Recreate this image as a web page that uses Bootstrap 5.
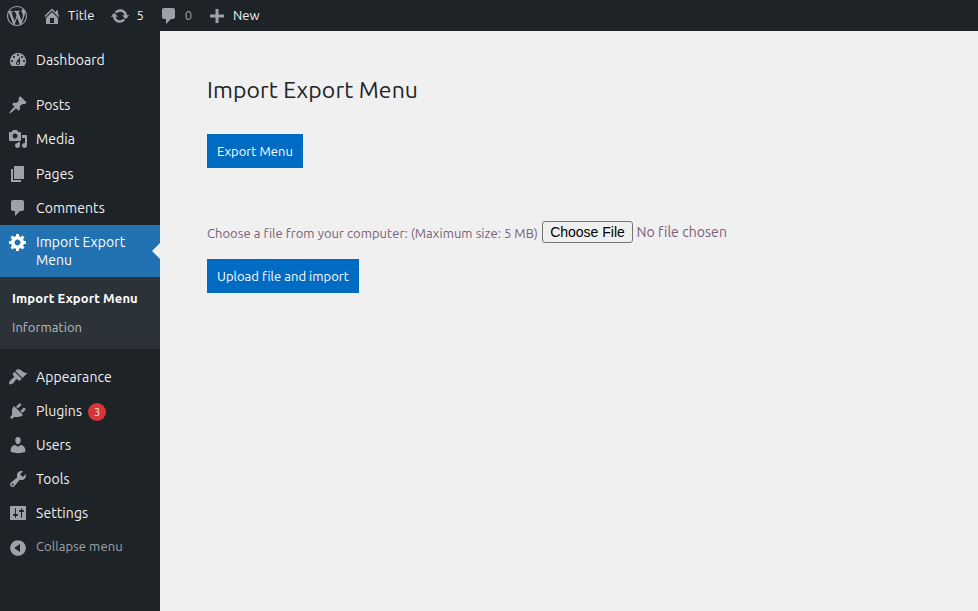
<!DOCTYPE html>
<html lang="en">
<head>
<meta charset="utf-8">
<meta name="viewport" content="width=device-width, initial-scale=1">
<title>Import Export Menu</title>
<link href="https://cdn.jsdelivr.net/npm/bootstrap@5.3.0/dist/css/bootstrap.min.css" rel="stylesheet">
<style>
body{font-family:Ubuntu,"Noto Sans",sans-serif;font-size:13px;background:#f0f0f0;color:#795f76;height:611px;overflow:hidden}
svg{fill:#9ca2a7;width:20px;height:20px;flex:none;display:block}
a{color:inherit;text-decoration:none}
.adminbar{height:31px;background:#1d2327;color:#f0f0f1;line-height:31px;padding-left:7px}
.adminbar a{gap:6px}
.bar-home{margin-left:15px}
.bar-item{margin-left:15px}
.bar-home + .bar-item{margin-left:16px}
.adminbar .zero{color:#9ca2a7}
.sidebar{width:160px;height:580px;background:#1d2327;color:#f0f0f1;padding-top:12px;flex:none}
.side-link{height:34.2px;padding-left:8px;gap:8px;font-size:14px;line-height:18px;letter-spacing:.07px}
.submenu ~ .side-link{height:34px}
.side-link.current{height:52px;background:#2271b1;color:#fff;padding-top:8px}
.side-link.current svg{fill:#fff;margin-top:-1px}
.side-link.current::after{content:"";position:absolute;right:0;top:18px;border:8px solid transparent;border-right-color:#f0f0f0;border-left:0}
.side-gap{margin-top:11px}
.submenu{height:72px;background:#2c3338;padding:12px 0 0 12px;line-height:19px;letter-spacing:.06px}
.submenu a{display:block;margin-bottom:10px;color:#b5bbc0}
.submenu a.here{color:#fff;font-weight:700;letter-spacing:.12px}
.count{width:18px;height:18px;background:#d63638;font-size:11px;margin-left:-2px;margin-top:2px;letter-spacing:0}
.sidebar .side-link.collapse-link{color:#a0a5aa;font-size:13px}
.collapse-link span{margin-top:-1px}
.collapse-link svg{margin-top:2px}
.content{padding:44px 0 0 47px}
.content h1{font-size:23px;line-height:30px;font-weight:400;color:#1d2327;margin:0 0 29px;letter-spacing:.1px}
.act{height:34px;padding:0 10px;border:0;border-radius:0;background:#006bc2;color:#fff;font-size:13px;line-height:34px;letter-spacing:.03px}
.file-row{margin-top:53px;height:22px;margin-bottom:16px}
.file-row label{letter-spacing:.04px;padding-top:3px;width:331px;white-space:nowrap}
.file-btn{font:14px/20px "Liberation Sans",Arial,sans-serif;border:1px solid #767676;border-radius:3px;background:#efefef;color:#000;padding:0;width:91px;height:22px;margin-left:4px}
.none{font-size:14px;margin-left:3.5px;letter-spacing:.05px}
</style>
<script src="https://cdn.jsdelivr.net/npm/bootstrap@5.3.0/dist/js/bootstrap.bundle.min.js"></script>
</head>
<body>
<header class="adminbar d-flex align-items-center">
  <a href="#"><svg viewBox="0 0 20 20"><path d="M20 10c0-5.51-4.49-10-10-10C4.48 0 0 4.49 0 10c0 5.52 4.48 10 10 10 5.51 0 10-4.48 10-10zM7.78 15.37L4.37 6.22c.55-.02 1.17-.08 1.17-.08.5-.06.44-1.13-.06-1.11 0 0-1.45.11-2.37.11-.18 0-.37 0-.58-.01C4.12 2.69 6.87 1.11 10 1.11c2.33 0 4.45.87 6.05 2.34-.68-.11-1.65.39-1.65 1.58 0 .74.45 1.36.9 2.1.35.61.55 1.36.55 2.46 0 1.49-1.4 5-1.4 5l-3.03-8.37c.54-.02.82-.17.82-.17.5-.05.44-1.25-.06-1.22 0 0-1.44.12-2.38.12-.87 0-2.33-.12-2.33-.12-.5-.03-.56 1.2-.06 1.22l.92.08 1.26 3.41zM17.41 10c.24-.64.74-1.87.43-4.25.7 1.29 1.05 2.71 1.05 4.25 0 3.29-1.73 6.24-4.4 7.78.97-2.59 1.94-5.2 2.92-7.78zM6.1 18.09C3.12 16.65 1.11 13.53 1.11 10c0-1.3.23-2.48.72-3.59C3.25 10.3 4.67 14.2 6.1 18.09zm4.03-6.63l2.58 6.98c-.86.29-1.76.45-2.71.45-.79 0-1.57-.11-2.29-.33.81-2.38 1.62-4.74 2.42-7.1z"/></svg></a>
  <a href="#" class="d-flex align-items-center bar-home"><svg viewBox="0 0 20 20"><path d="M16 8.5l1.53 1.53-1.06 1.06L10 4.6l-6.47 6.49-1.06-1.06L10 2.5l4 4v-2h2v4zm-6-2.46l6 5.99V18H4v-5.97zM12 17v-5H8v5h4z"/></svg><span>Title</span></a>
  <a href="#" class="d-flex align-items-center bar-item"><svg viewBox="0 0 20 20"><path d="M10.2 3.28c3.53 0 6.43 2.61 6.92 6h2.08l-3.5 4-3.5-4h2.32c-.45-1.97-2.21-3.45-4.32-3.45-1.45 0-2.73.71-3.54 1.78L4.95 5.66C6.23 4.2 8.11 3.28 10.2 3.28zm-.4 13.44c-3.52 0-6.43-2.61-6.92-6H.8l3.5-4c1.17 1.33 2.33 2.67 3.5 4H5.48c.45 1.97 2.21 3.45 4.32 3.45 1.45 0 2.73-.71 3.54-1.78l1.71 1.95c-1.28 1.46-3.15 2.38-5.25 2.38z"/></svg><span>5</span></a>
  <a href="#" class="d-flex align-items-center bar-item zero"><svg viewBox="0 0 20 20"><path d="M5 2h9c1.1 0 2 .9 2 2v7c0 1.1-.9 2-2 2h-2l-5 5v-5H5c-1.1 0-2-.9-2-2V4c0-1.1.9-2 2-2z"/></svg><span>0</span></a>
  <a href="#" class="d-flex align-items-center bar-item"><svg viewBox="0 0 20 20"><path d="M17 8.5v3h-5.5V17h-3v-5.500H3v-3h5.500V3h3v5.500z"/></svg><span>New</span></a>
</header>
<div class="d-flex">
<nav class="sidebar">
  <a href="#" class="side-link d-flex align-items-center"><svg viewBox="0 0 20 20"><path fill-rule="evenodd" d="M3.760 16h12.480A7.998 7.998 0 0 0 10 3a7.998 7.998 0 0 0-6.240 13zM10 4c.55 0 1 .45 1 1s-.45 1-1 1-1-.45-1-1 .45-1 1-1zM6 6c.55 0 1 .45 1 1s-.45 1-1 1-1-.45-1-1 .45-1 1-1zm8 0c.55 0 1 .45 1 1s-.45 1-1 1-1-.45-1-1 .45-1 1-1zm-5.370 5.550L12 7v6c0 1.100-.9 2-2 2s-2-.9-2-2c0-.57.24-1.080.63-1.450zM4 10c.55 0 1 .45 1 1s-.45 1-1 1-1-.45-1-1 .45-1 1-1zm12 0c.55 0 1 .45 1 1s-.45 1-1 1-1-.45-1-1 .45-1 1-1zm-5 3c0-.55-.45-1-1-1s-1 .45-1 1 .45 1 1 1 1-.45 1-1z"/></svg><span>Dashboard</span></a>
  <a href="#" class="side-link side-gap d-flex align-items-center"><svg viewBox="0 0 20 20"><path d="M10.440 3.020l1.820-1.820 6.360 6.350-1.830 1.820c-1.050-.68-2.480-.57-3.410.36l-.75.75c-.92.93-1.040 2.350-.35 3.410l-1.830 1.820-2.410-2.410-2.800 2.790c-.42.42-3.380 2.710-3.800 2.290s1.860-3.390 2.280-3.810l2.790-2.790L4.100 9.360l1.830-1.820c1.050.69 2.480.57 3.400-.36l.75-.75c.93-.92 1.050-2.350.36-3.410z"/></svg><span>Posts</span></a>
  <a href="#" class="side-link d-flex align-items-center"><svg viewBox="0 0 20 20"><path d="M13 11V4c0-.55-.45-1-1-1h-1.670L9 1H5L3.670 3H2c-.55 0-1 .45-1 1v7c0 .55.45 1 1 1h10c.55 0 1-.45 1-1zM7 4.500c1.380 0 2.500 1.120 2.500 2.500S8.380 9.500 7 9.500 4.500 8.380 4.500 7 5.620 4.500 7 4.500zM14 6h5v10.500c0 1.380-1.120 2.500-2.500 2.500S14 17.880 14 16.500s1.120-2.500 2.500-2.500c.17 0 .34.02.5.05V9h-3V6zm-4 8.050V13h2v3.500c0 1.380-1.120 2.500-2.500 2.500S7 17.880 7 16.500 8.120 14 9.500 14c.17 0 .34.02.5.05z" fill-rule="evenodd"/></svg><span>Media</span></a>
  <a href="#" class="side-link d-flex align-items-center"><svg viewBox="0 0 20 20"><path d="M6 15V2h10v13H6zm-1 1h8v2H3V5h2v11z"/></svg><span>Pages</span></a>
  <a href="#" class="side-link d-flex align-items-center"><svg viewBox="0 0 20 20"><path d="M5 2h9c1.100 0 2 .9 2 2v7c0 1.100-.9 2-2 2h-2l-5 5v-5H5c-1.100 0-2-.9-2-2V4c0-1.100.9-2 2-2z"/></svg><span>Comments</span></a>
  <a href="#" class="side-link current d-flex align-items-start position-relative"><svg viewBox="0 0 20 20"><path fill-rule="evenodd" d="M18 12h-2.180c-.17.7-.44 1.350-.81 1.930l1.540 1.540-2.100 2.100-1.540-1.540c-.58.36-1.230.63-1.910.79V19H8v-2.180c-.68-.16-1.330-.43-1.910-.79l-1.540 1.540-2.120-2.120 1.540-1.540c-.36-.58-.63-1.230-.79-1.910H1V9.030h2.170c.16-.7.44-1.350.8-1.940L2.430 5.550l2.100-2.100 1.540 1.540c.58-.37 1.240-.64 1.930-.81V2h3v2.180c.68.16 1.330.43 1.910.79l1.540-1.540 2.120 2.120-1.540 1.540c.36.59.64 1.240.8 1.940H18V12zm-8.500 1.500c1.660 0 3-1.340 3-3s-1.340-3-3-3-3 1.340-3 3 1.340 3 3 3z"/></svg><span>Import Export<br>Menu</span></a>
  <div class="submenu"><a href="#" class="here">Import Export Menu</a><a href="#">Information</a></div>
  <a href="#" class="side-link side-gap d-flex align-items-center"><svg viewBox="0 0 20 20"><path d="M14.480 11.060L7.410 3.990l1.500-1.500c.5-.56 2.300-.47 3.510.32 1.210.8 1.430 1.280 2.910 2.100 1.180.64 2.450 1.260 4.450.85zm-.71.71L6.700 4.700 4.930 6.470c-.39.39-.39 1.020 0 1.410l1.060 1.060c.39.39.39 1.030 0 1.420-.6.6-1.430 1.110-2.210 1.690-.35.26-.7.53-1.010.84C1.430 14.230.4 16.080 1.400 17.070c.99 1 2.840-.03 4.180-1.360.31-.31.58-.66.85-1.020.57-.78 1.080-1.610 1.690-2.210.39-.39 1.020-.39 1.410 0l1.060 1.060c.39.39 1.020.39 1.410 0z"/></svg><span>Appearance</span></a>
  <a href="#" class="side-link d-flex align-items-center"><svg viewBox="0 0 20 20"><path d="M13.110 4.360L9.870 7.600 8 5.730l3.240-3.240c.35-.34 1.050-.2 1.560.32.52.51.66 1.210.31 1.550zm-8 1.770l.91-1.120 9.010 9.010-1.190.84c-.71.71-2.630 1.160-3.820 1.160H6.140L4.900 17.260c-.59.59-1.540.59-2.120 0-.59-.58-.59-1.530 0-2.120l1.240-1.240v-3.880c0-1.130.4-3.190 1.090-3.890zm7.260 3.970l3.240-3.240c.34-.35 1.040-.21 1.550.31.52.51.66 1.210.31 1.550l-3.240 3.250z"/></svg><span>Plugins</span><span class="count rounded-circle d-flex align-items-center justify-content-center">3</span></a>
  <a href="#" class="side-link d-flex align-items-center"><svg viewBox="0 0 20 20"><path d="M10 9.250c-2.270 0-2.730-3.440-2.730-3.440C7 4.020 7.820 2 9.970 2c2.160 0 2.980 2.020 2.710 3.810 0 0-.41 3.440-2.680 3.440zm0 2.570L12.720 10c2.390 0 4.520 2.330 4.520 4.530v2.490s-3.650 1.130-7.240 1.130c-3.650 0-7.240-1.130-7.240-1.130v-2.490c0-2.250 1.940-4.480 4.470-4.480z"/></svg><span>Users</span></a>
  <a href="#" class="side-link d-flex align-items-center"><svg viewBox="0 0 20 20"><path fill-rule="evenodd" d="M16.680 9.770c-1.340 1.340-3.300 1.670-4.950.99l-5.410 6.520c-.99.99-2.590.99-3.580 0s-.99-2.590 0-3.570l6.520-5.420c-.68-1.650-.35-3.610.99-4.950 1.280-1.280 3.120-1.620 4.720-1.060l-2.890 2.890 2.820 2.820 2.860-2.870c.53 1.580.18 3.390-1.080 4.650zM3.810 16.210c.4.39 1.040.39 1.430 0 .4-.4.4-1.040 0-1.430-.39-.4-1.030-.4-1.430 0-.39.39-.39 1.030 0 1.430z"/></svg><span>Tools</span></a>
  <a href="#" class="side-link d-flex align-items-center"><svg viewBox="0 0 20 20"><path fill-rule="evenodd" d="M18 16V4c0-.55-.45-1-1-1H3c-.55 0-1 .45-1 1v12c0 .55.45 1 1 1h14c.55 0 1-.45 1-1zM8 11h1c.55 0 1 .45 1 1s-.45 1-1 1H8v1.500c0 .28-.22.5-.5.5s-.5-.22-.5-.5V13H6c-.55 0-1-.45-1-1s.45-1 1-1h1V5.500c0-.28.22-.5.5-.5s.5.22.5.5V11zm5-2h-1c-.55 0-1-.45-1-1s.45-1 1-1h1V5.500c0-.28.22-.5.5-.5s.5.22.5.5V7h1c.55 0 1 .45 1 1s-.45 1-1 1h-1v5.500c0 .28-.22.5-.5.5s-.5-.22-.5-.5V9z"/></svg><span>Settings</span></a>
  <a href="#" class="side-link collapse-link d-flex align-items-center"><svg viewBox="0 0 20 20"><path fill-rule="evenodd" d="M10 2.160c4.330 0 7.840 3.510 7.840 7.840s-3.510 7.840-7.840 7.840S2.160 14.330 2.160 10 5.710 2.160 10 2.160zm2 11.720V6.120L6.180 9.970z"/></svg><span>Collapse menu</span></a>
</nav>
<main class="content flex-grow-1">
  <h1>Import Export Menu</h1>
  <button type="button" class="btn act d-block">Export Menu</button>
  <div class="file-row d-flex align-items-center"><label>Choose a file from your computer: (Maximum size: 5 MB)</label><button type="button" class="file-btn">Choose File</button><span class="none">No file chosen</span></div>
  <button type="button" class="btn act d-block">Upload file and import</button>
</main>
</div>
</body>
</html>
